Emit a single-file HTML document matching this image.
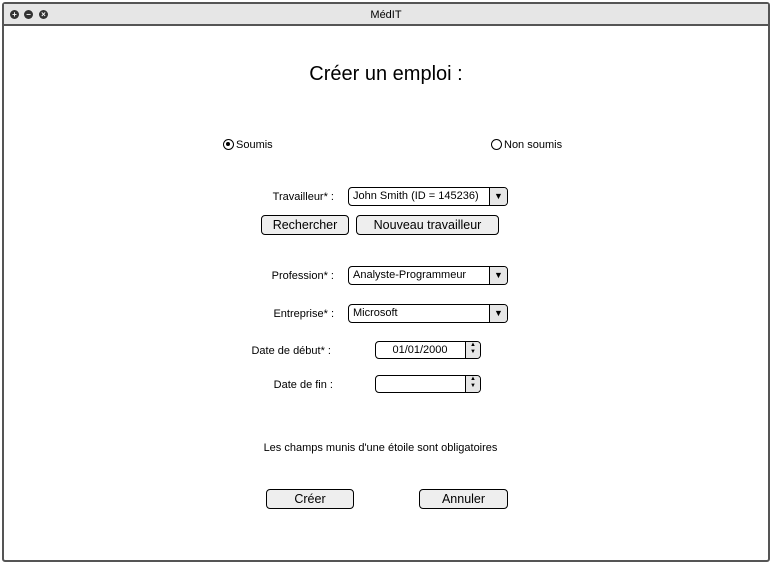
<!DOCTYPE html>
<html><head><meta charset="utf-8"><style>
*{margin:0;padding:0;box-sizing:border-box}
body{width:772px;height:564px;background:#fff;font-family:"Liberation Sans",Arial,sans-serif;position:relative;overflow:hidden;color:#000}
.win{position:absolute;left:2px;top:2px;width:768px;height:560px;border:2px solid #555;border-radius:3px;background:#fff}
.tb{position:absolute;left:0;top:0;width:764px;height:22px;background:#e6e6e6;border-bottom:2px solid #555}
.tb .t{position:absolute;left:0;right:0;top:5px;text-align:center;font-size:11px}
.ic{position:absolute;top:6px;width:9px;height:9px;border-radius:50%;background:#333;color:#fff;font-size:8px;line-height:9px;text-align:center;font-weight:bold}
.a{position:absolute;font-size:11px;white-space:nowrap}
.r{text-align:right}
.sel{position:absolute;border:1.5px solid #000;border-radius:4px;background:#fff;font-size:11px;padding-left:4px;line-height:17px}
.sel .ar{position:absolute;right:0;top:0;bottom:0;width:18px;border-left:1px solid #000;background:#e6e6e6;font-size:9px;text-align:center;line-height:16px;border-radius:0 3px 3px 0}
.btn{position:absolute;border:1.5px solid #000;border-radius:4px;background:#eee;font-size:12.5px;text-align:center;line-height:18px}
.sp{position:absolute;width:106px;height:18px;border:1.5px solid #000;border-radius:4px;background:#fff;font-size:11px;line-height:16px;padding-right:16px;text-align:center}
.sp .ar{position:absolute;right:0;top:0;bottom:0;width:15px;border-left:1px solid #000;background:#e6e6e6;font-size:6px;line-height:7px;text-align:center;border-radius:0 3px 3px 0}
.rad{position:absolute;width:11px;height:11px;border:1.5px solid #000;border-radius:50%;background:#fff}
</style></head><body>
<div class="win"><div class="tb"><div class="ic" style="left:6px">+</div><div class="ic" style="left:20px">−</div><div class="ic" style="left:35px">×</div><div class="t">MédIT</div></div></div>
<div class="a" style="left:0;width:772px;text-align:center;top:63px;font-size:20px">Créer un emploi :</div>
<div class="rad" style="left:223px;top:139px"><div style="position:absolute;left:2px;top:2px;width:4px;height:4px;border-radius:50%;background:#000"></div></div>
<div class="a" style="left:236px;top:139px">Soumis</div>
<div class="rad" style="left:491px;top:139px"></div>
<div class="a" style="left:504px;top:139px">Non soumis</div>
<div class="a r" style="left:200px;width:134px;top:191px">Travailleur* :</div>
<div class="sel" style="left:348px;top:187px;width:160px;height:19px">John Smith (ID = 145236)<div class="ar">▼</div></div>
<div class="btn" style="left:261px;top:215px;width:88px;height:20px">Rechercher</div>
<div class="btn" style="left:356px;top:215px;width:143px;height:20px">Nouveau travailleur</div>
<div class="a r" style="left:200px;width:134px;top:270px">Profession* :</div>
<div class="sel" style="left:348px;top:266px;width:160px;height:19px">Analyste-Programmeur<div class="ar">▼</div></div>
<div class="a r" style="left:200px;width:134px;top:308px">Entreprise* :</div>
<div class="sel" style="left:348px;top:304px;width:160px;height:19px">Microsoft<div class="ar">▼</div></div>
<div class="a r" style="left:200px;width:131px;top:345px">Date de début* :</div>
<div class="sp" style="left:375px;top:341px">01/01/2000<div class="ar">▲<br>▼</div></div>
<div class="a r" style="left:200px;width:133px;top:379px">Date de fin :</div>
<div class="sp" style="left:375px;top:375px"><div class="ar">▲<br>▼</div></div>
<div class="a" style="left:0;width:761px;text-align:center;top:442px">Les champs munis d'une étoile sont obligatoires</div>
<div class="btn" style="left:266px;top:489px;width:88px;height:20px">Créer</div>
<div class="btn" style="left:419px;top:489px;width:89px;height:20px">Annuler</div>
</body></html>
